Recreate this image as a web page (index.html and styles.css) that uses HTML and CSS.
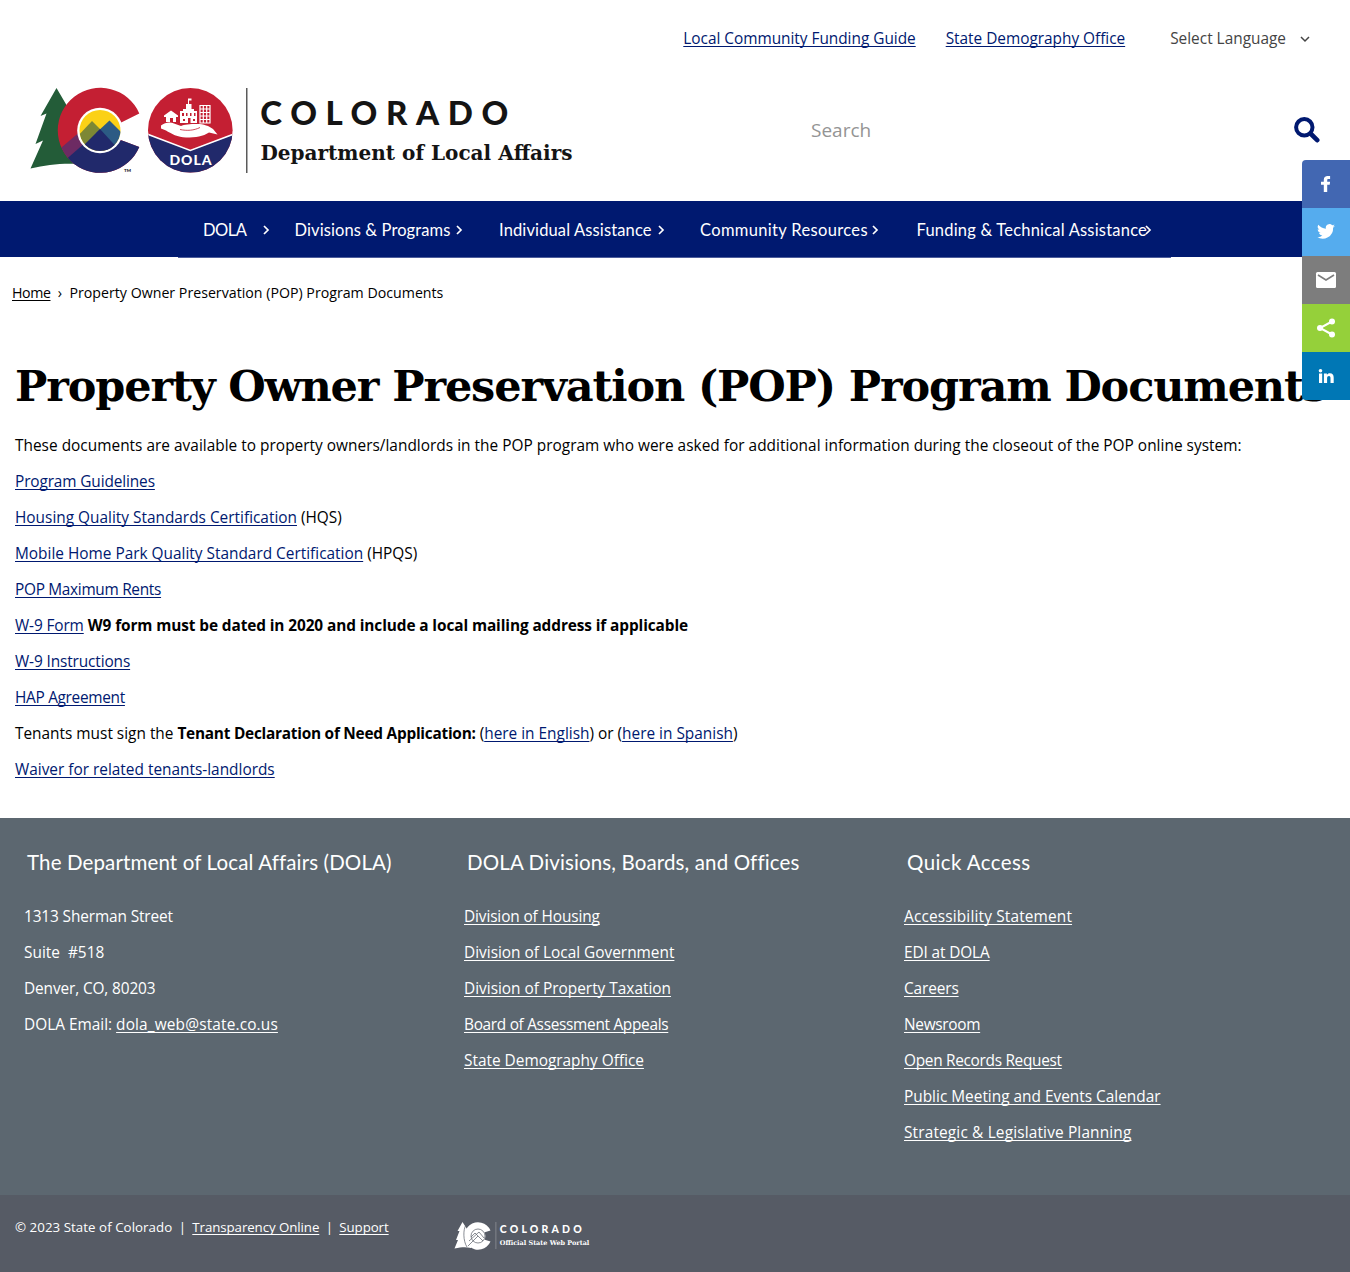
FILE: index.html
```html
<!DOCTYPE html>
<html lang="en">
<head>
<meta charset="utf-8">
<title>Property Owner Preservation (POP) Program Documents</title>
<link rel="stylesheet" href="styles.css">
</head>
<body>
<header class="site-header">
  <div class="utility">
    <a class="utility-link" href="#">Local Community Funding Guide</a>
    <a class="utility-link" href="#">State Demography Office</a>
    <span class="language">Select Language
      <svg width="10" height="7" viewBox="0 0 10 7"><path d="M1 1l4 4 4-4" fill="none" stroke="#444" stroke-width="1.5"/></svg>
    </span>
  </div>
  <div class="brand-row">
    <svg class="logo" width="570" height="100" viewBox="0 0 570 100" role="img" aria-label="Colorado Department of Local Affairs">
      <defs>
        <clipPath id="c-shape"><path d="M119.300 33.500A42.500 42.500 0 1 0 119.300 67.100L100.700 60L81 51L100.700 42.700Z"/></clipPath>
        <clipPath id="c-disc"><circle cx="80" cy="50.500" r="20.500"/></clipPath>
        <clipPath id="d-disc"><circle cx="170.300" cy="50.300" r="42.300"/></clipPath>
      </defs>
      <path fill="#235c38" d="M36.500 8L20.500 36L26.500 33.500L15.500 64L23 60.500L10.500 88.500C27 85 40 83 60 84L62 50L50 31Z"/>
      <g clip-path="url(#c-shape)">
        <rect x="36" y="5" width="90" height="90" fill="#c41f33"/>
        <path fill="#6d2b63" d="M36 72L62 50L80 70L60 85L45 85Z"/>
        <path fill="#21296b" d="M42 83L66 62L125 59V95H48Z"/>
      </g>
      <circle cx="80" cy="50.500" r="22.800" fill="#fff"/>
      <g clip-path="url(#c-disc)">
        <rect x="58" y="28" width="44" height="44" fill="#fbd116"/>
        <path fill="#7d8735" d="M55 59L72 41L84 53L66 72H55Z"/>
        <path fill="#2c5b84" d="M76 53L89.500 40.500L106 57V70H80Z"/>
        <path fill="#21296b" d="M56 73L80 49L102 73Z"/>
      </g>
      <text x="104" y="92" class="trademark">TM</text>
      <g clip-path="url(#d-disc)">
        <rect x="127" y="7" width="87" height="87" fill="#c41f33"/>
        <path fill="#21296b" d="M127 54L170.300 70.500L214 54V95H127Z"/>
        <path fill="none" stroke="#fff" stroke-width="1.600" d="M127 54L170.300 70.500L214 54"/>
      </g>
      <g fill="#fff">
        <path d="M141 45.500C145 42.500 150 41.800 154 43.500L161 46C164 44.500 170 44 177 44C184 44 189 46 193 49L197.500 54.500L189 52.500C183 56.500 176 57.500 166 57.500C158 57.500 151 53.500 146 50.500L141 48.500Z"/>
        <path d="M144 35.500L151 30.500L158 35.500V37H156V42H153V38H150V42H146V37H144Z"/>
        <path d="M160 31H163V29H166V24H168V18.500H171.500V20.500H169V24H171.500V29H174V31H177V43H160Z"/>
      </g>
      <g fill="#c41f33"><path d="M162 33h2v3h-2zM166 33h1.500v3H166zM170 33h1.500v3H170zM174 33h1.500v3H174zM163 39h2v2h-2zM168 38h2.500v5H168zM173 39h2v2h-2z"/></g>
      <path fill="none" stroke="#fff" stroke-width="1.200" d="M180 25.500H190V43H180ZM183.300 25.500V43M186.700 25.500V43M180 29H190M180 32.500H190M180 36H190M180 39.500H190"/>
      <path fill="none" stroke="#c41f33" stroke-width=".8" d="M160 49.500C167 51 174 50.500 180 47.500"/>
      <text x="149.500" y="84.500" class="dola" textLength="42">DOLA</text>
      <rect x="226.200" y="8" width="1.200" height="85" fill="#333"/>
      <text x="240.300" y="45.200" class="state" textLength="248">COLORADO</text>
      <text x="240.500" y="80" class="dept" textLength="312" lengthAdjust="spacingAndGlyphs">Department of Local Affairs</text>
    </svg>
    <form class="search">
      <span class="search-text">Search</span>
      <svg width="26" height="26" viewBox="0 0 26 26"><circle cx="10.300" cy="10.300" r="8.200" fill="none" stroke="#001970" stroke-width="4"/><path d="M16.500 16.500L23.200 23.200" stroke="#001970" stroke-width="4.600" stroke-linecap="round"/></svg>
    </form>
  </div>
</header>

<nav class="main-nav">
  <a class="nav-item dola-item" href="#"><span>DOLA</span><svg viewBox="0 0 8 10"><path d="M2 1l4 4-4 4"/></svg></a>
  <a class="nav-item divisions" href="#"><span>Divisions &amp; Programs</span><svg viewBox="0 0 8 10"><path d="M2 1l4 4-4 4"/></svg></a>
  <a class="nav-item individual" href="#"><span>Individual Assistance</span><svg viewBox="0 0 8 10"><path d="M2 1l4 4-4 4"/></svg></a>
  <a class="nav-item community" href="#"><span>Community Resources</span><svg viewBox="0 0 8 10"><path d="M2 1l4 4-4 4"/></svg></a>
  <a class="nav-item funding" href="#"><span>Funding &amp; Technical Assistance</span><svg viewBox="0 0 8 10"><path d="M2 1l4 4-4 4"/></svg></a>
</nav>
<div class="nav-edge"></div>

<div class="breadcrumb"><a href="#">Home</a><span class="crumb-sep">›</span><span>Property Owner Preservation (POP) Program Documents</span></div>

<main class="content">
  <h1>Property Owner Preservation (POP) Program Documents</h1>
  <p class="intro">These documents are available to property owners/landlords in the POP program who were asked for additional information during the closeout of the POP online system:</p>
  <p class="snug"><a href="#">Program Guidelines</a></p>
  <p><a href="#">Housing Quality Standards Certification</a> (HQS)</p>
  <p><a href="#">Mobile Home Park Quality Standard Certification</a> (HPQS)</p>
  <p class="tight"><a href="#">POP Maximum Rents</a></p>
  <p><a href="#" class="snug">W-9 Form</a> <strong>W9 form must be dated in 2020 and include a local mailing address if applicable</strong></p>
  <p class="snug"><a href="#">W-9 Instructions</a></p>
  <p class="tight"><a href="#">HAP Agreement</a></p>
  <p>Tenants must sign the <strong class="tenant">Tenant Declaration of Need Application:</strong> (<a href="#">here in English</a>) or (<a href="#">here in Spanish</a>)</p>
  <p><a href="#">Waiver for related tenants-landlords</a></p>
</main>

<footer>
  <div class="footer-columns">
    <section>
      <h2>The Department of Local Affairs (DOLA)</h2>
      <p class="snug">1313 Sherman Street</p>
      <p>Suite&nbsp; #518</p>
      <p class="snug">Denver, CO, 80203</p>
      <p>DOLA Email: <a href="#" class="loose">dola_web@state.co.us</a></p>
    </section>
    <section>
      <h2>DOLA Divisions, Boards, and Offices</h2>
      <p class="snug"><a href="#">Division of Housing</a></p>
      <p><a href="#">Division of Local Government</a></p>
      <p><a href="#">Division of Property Taxation</a></p>
      <p class="tight"><a href="#">Board of Assessment Appeals</a></p>
      <p><a href="#">State Demography Office</a></p>
    </section>
    <section>
      <h2 class="quick">Quick Access</h2>
      <p class="loose"><a href="#">Accessibility Statement</a></p>
      <p class="snug"><a href="#">EDI at DOLA</a></p>
      <p class="snug"><a href="#">Careers</a></p>
      <p class="tight"><a href="#">Newsroom</a></p>
      <p class="tight"><a href="#">Open Records Request</a></p>
      <p><a href="#">Public Meeting and Events Calendar</a></p>
      <p class="loose"><a href="#">Strategic &amp; Legislative Planning</a></p>
    </section>
  </div>
  <div class="footer-bottom">
    <div class="legal"><span class="copyright">© 2023 State of Colorado</span><span class="bar">|</span><a href="#">Transparency Online</a><span class="bar">|</span><a href="#">Support</a></div>
    <svg width="160" height="30" viewBox="0 0 160 30" role="img" aria-label="Colorado Official State Web Portal">
      <path fill="#fff" d="M8.500 1L3.500 10H5.500L2 19H4L.5 27.500C8 26 12 26 17 27L18 10L13 8Z"/>
      <path fill="#fff" d="M36.500 9.500A13.700 13.700 0 1 0 36.500 20.500L30 18.500A7.500 7.500 0 0 1 30 11.500Z"/>
      <circle cx="24" cy="15" r="7.500" fill="#fff"/>
      <g fill="none" stroke="#565b65" stroke-width=".7"><circle cx="24" cy="15" r="7"/><path d="M17 16L21 12L24 15M15 20L25 11L30 17M14 25L24 15L29 20M12 4C9 8 9 20 13 26"/></g>
      <rect x="41.500" y="1" width=".8" height="27" fill="#8b8f96"/>
      <text x="45.800" y="12" class="mini-state" textLength="82">COLORADO</text>
      <text x="45.800" y="24" class="mini-portal" textLength="89.500" lengthAdjust="spacingAndGlyphs">Official State Web Portal</text>
    </svg>
  </div>
</footer>

<aside class="share-bar">
  <a class="share facebook" href="#"><svg viewBox="0 0 24 24"><path d="M9.800 20v-7.200H7V9.700h2.800V7.700C9.800 5.300 11.300 4 13.700 4h2.400v2.900h-1.500c-1.100 0-1.400.5-1.400 1.300v1.500h2.900l-.4 3.100h-2.500V20z"/></svg></a>
  <a class="share twitter" href="#"><svg viewBox="0 0 24 24"><path d="M21 5.800c-.7.300-1.400.5-2.100.6.800-.5 1.300-1.200 1.600-2-.7.400-1.500.7-2.300.9A3.700 3.700 0 0 0 11.900 8.700 10.500 10.500 0 0 1 4.300 4.800a3.700 3.700 0 0 0 1.100 4.900c-.6 0-1.200-.2-1.700-.5 0 1.800 1.300 3.300 3 3.700-.5.100-1.100.2-1.700.1.500 1.500 1.800 2.500 3.400 2.600A7.500 7.500 0 0 1 3 17.100a10.500 10.500 0 0 0 16.100-9.400c.7-.5 1.400-1.200 1.900-1.900z"/></svg></a>
  <a class="share email" href="#"><svg viewBox="0 0 24 24"><path d="M3.500 4h17A1.500 1.500 0 0 1 22 5.500v13a1.500 1.500 0 0 1-1.500 1.500h-17A1.500 1.500 0 0 1 2 18.500v-13A1.500 1.500 0 0 1 3.500 4z"/><path d="M4 7l8 5 8-5" fill="none" stroke="#7d7d7d" stroke-width="1.600"/></svg></a>
  <a class="share sharethis" href="#"><svg viewBox="0 0 24 24"><path d="M18 5.500L6 12l12 6.500" fill="none" stroke="#fff" stroke-width="2"/><circle cx="18" cy="5.500" r="3"/><circle cx="6" cy="12" r="3"/><circle cx="18" cy="18.500" r="3"/></svg></a>
  <a class="share linkedin" href="#"><svg viewBox="0 0 24 24"><circle cx="6.500" cy="6.800" r="1.800"/><path d="M5 9.600h3.200V19H5zM9.900 9.600h3v1.300c.5-.9 1.500-1.600 3-1.600 2.700 0 3.800 1.600 3.800 4.400V19h-3.200v-4.600c0-1.400-.3-2.300-1.500-2.300s-1.900.9-1.900 2.200V19H9.900z"/></svg></a>
</aside>
</body>
</html>
```
FILE: styles.css
```css
* { box-sizing: border-box; }
body {
  margin: 0;
  position: relative;
  background: #fff;
  color: #111;
  font: 15.4px/24px "Open Sans", sans-serif;
  overflow-x: hidden;
}
a { color: #001970; text-underline-offset: 1.5px; text-decoration-thickness: 1px; text-decoration-skip-ink: none; }
svg { display: block; flex: none; }
.snug { letter-spacing: -.12px; }
.tight { letter-spacing: -.3px; }
.loose { letter-spacing: .16px; }

.utility {
  display: flex;
  justify-content: flex-end;
  align-items: center;
  height: 76px;
  padding: 2px 40px 0 0;
  white-space: nowrap;
}
.utility-link { margin-right: 30px; letter-spacing: -.02px; }
.language { display: flex; align-items: center; gap: 14px; margin-left: 15px; color: #444; }

.brand-row { display: flex; justify-content: space-between; height: 125px; padding: 4px 30px 0 20px; }
.search { display: flex; align-items: center; justify-content: space-between; width: 509px; height: 99px; }
.search-text { color: #949494; font-size: 19px; }

.trademark { font: 900 4.5px Lato, sans-serif; fill: #222; }
.dola { font: 900 14px Lato, sans-serif; fill: #fff; }
.state { font: 900 33px Lato, sans-serif; fill: #141414; }
.dept { font: bold 21px "DejaVu Serif", serif; fill: #141414; }

.main-nav { display: flex; align-items: center; height: 56px; padding: 1px 0 0 203px; background: #001970; font-family: Lato, sans-serif; font-size: 16.5px; }
.nav-item { display: flex; align-items: center; color: #fff; text-decoration: none; white-space: nowrap; }
.nav-item span { flex: 1 1 0; width: 0; }
.nav-item svg { width: 8px; height: 10px; margin-top: 1px; fill: none; stroke: #fff; stroke-width: 1.7; }
.dola-item { width: 67px; margin-right: 24.5px; letter-spacing: -.5px; }
.divisions { width: 168px; margin-right: 36.5px; letter-spacing: .1px; }
.individual { width: 165.500px; margin-right: 35.5px; letter-spacing: .13px; }
.community { width: 179px; margin-right: 37.5px; letter-spacing: .34px; }
.funding { width: 235px; letter-spacing: .2px; }
.nav-edge { width: 993px; height: 1px; margin-left: 178px; background: #4d5d9b; }

.breadcrumb { display: flex; height: 98px; padding: 23px 12px 0; font-size: 14.2px; color: #000; }
.breadcrumb a { color: #000; letter-spacing: -.4px; }
.crumb-sep { width: 19px; text-align: center; }

.content { height: 462px; padding: 0 15px; color: #000; }
h1 { margin: 0 0 18px; font: bold 43px/60px "DejaVu Serif", serif; letter-spacing: -1.14px; white-space: nowrap; }
p { margin: 0 0 12px; white-space: nowrap; }
.intro { letter-spacing: .02px; }
strong { letter-spacing: -.1px; }
.tenant { letter-spacing: -.25px; }

footer { color: #fff; }
footer a { color: #fff; }
.footer-columns { display: grid; grid-template-columns: 440px 440px 440px; height: 377px; padding: 29px 0 0 24px; background: #5c6770; }
h2 { margin: 0 0 28px 3px; font: 20.5px/30px Lato, sans-serif; letter-spacing: .13px; }
.quick { letter-spacing: .4px; }
.footer-bottom { display: flex; height: 77px; padding: 20px 15px 0; background: #565b65; }
.legal { display: flex; width: 439px; font-size: 13.3px; white-space: nowrap; }
.copyright { letter-spacing: .05px; }
.legal a { letter-spacing: -.08px; }
.bar { width: 20px; text-align: center; }
.footer-bottom svg { margin-top: 6px; }
.mini-state { font: 900 10.500px Lato, sans-serif; fill: #fff; }
.mini-portal { font: bold 6.5px "DejaVu Serif", serif; fill: #fff; }

.share-bar { position: absolute; top: 160px; right: 0; width: 48px; border-radius: 4px 0 0 4px; overflow: hidden; }
.share { display: flex; align-items: center; justify-content: center; height: 48px; }
.share svg { width: 24px; height: 24px; fill: #fff; }
.facebook { background: #4267b2; }
.twitter { background: #55acee; }
.email { background: #7d7d7d; }
.sharethis { background: #95d03a; }
.linkedin { background: #0077b5; }
```
